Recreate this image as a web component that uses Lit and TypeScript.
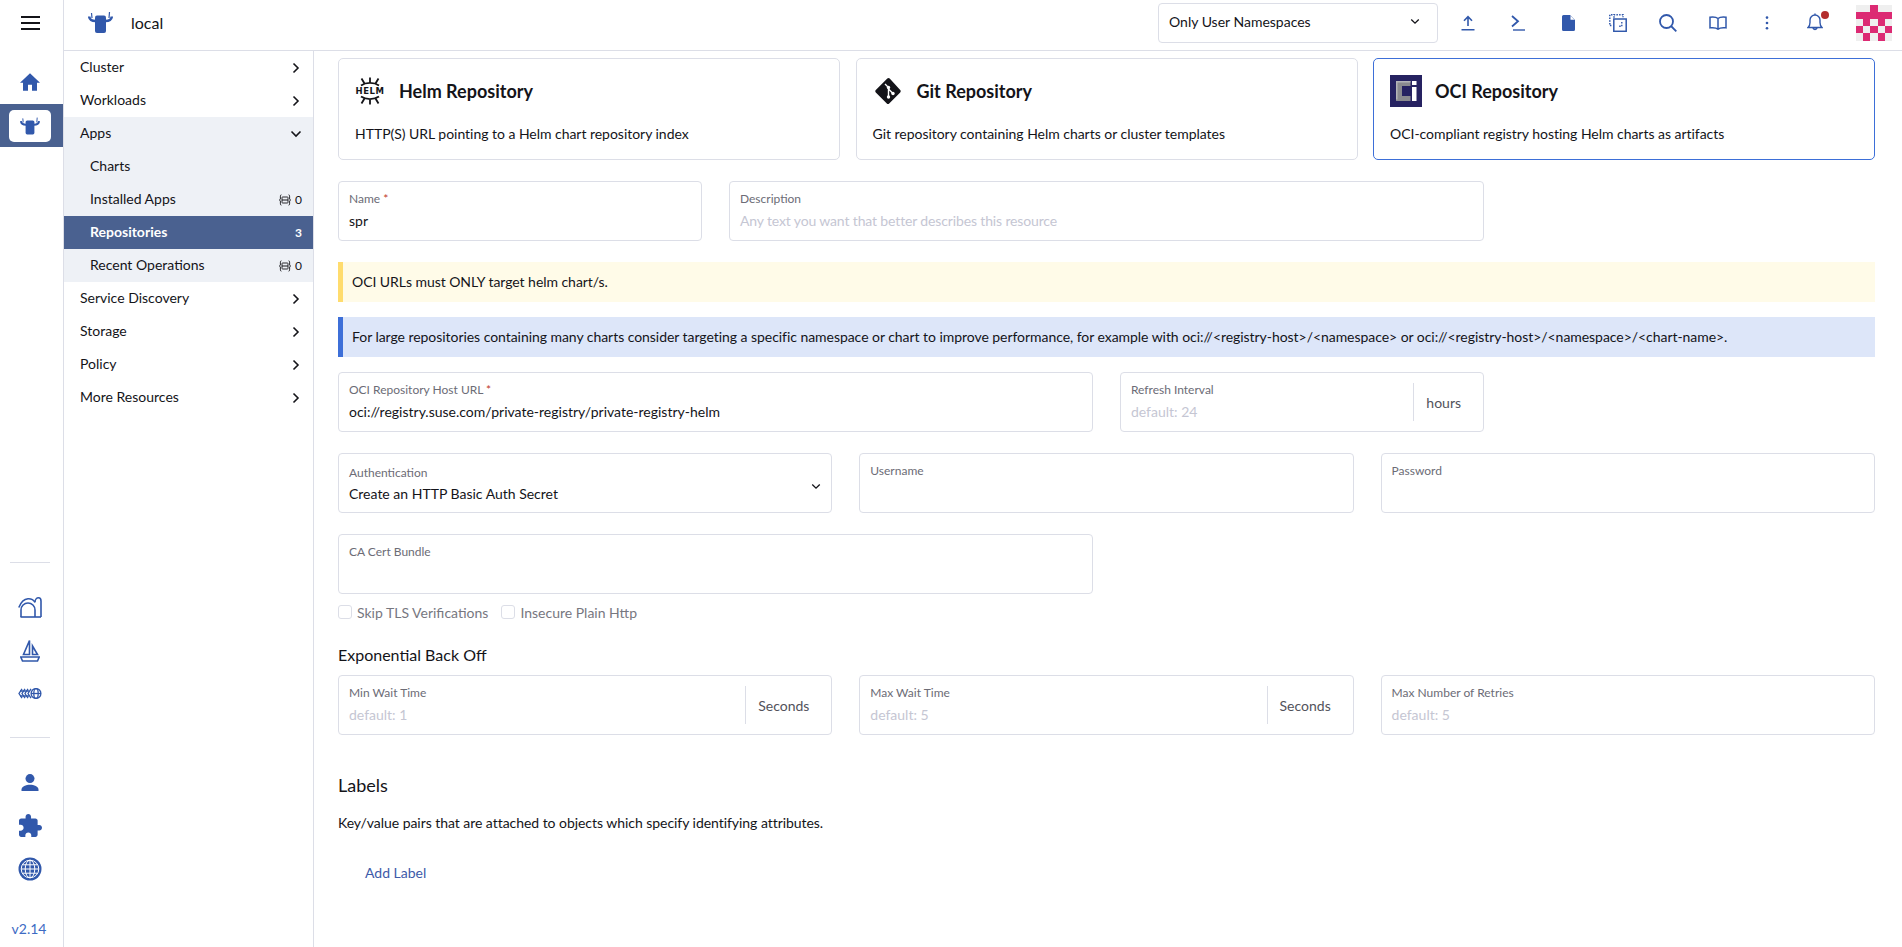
import { LitElement, html, css } from 'lit';
import { customElement } from 'lit/decorators.js';

const bull = html`<svg viewBox="0 0 25 21" class="bull"><path d="M7 5.500a2 2 0 0 1 2-2h7a2 2 0 0 1 2 2v13.500a2 2 0 0 1-2 2H9a2 2 0 0 1-2-2z" fill="currentColor"/><path d="M1.200 4.500c.3 3.200 2.400 4.500 6.300 4.500M23.800 4.500c-.3 3.200-2.400 4.500-6.300 4.500" fill="none" stroke="currentColor" stroke-width="2.600"/><path d="M3.500 1l.5 5M21.500 0l-.5 6" fill="none" stroke="currentColor" stroke-width="1.200"/></svg>`;

const chevR = html`<svg viewBox="0 0 8 12" class="chev"><path d="M1.500 1.500L6 6l-4.500 4.500" fill="none" stroke="currentColor" stroke-width="1.600"/></svg>`;
const chevD = html`<svg viewBox="0 0 12 8" class="chev-d"><path d="M1.500 1.500L6 6l4.500-4.500" fill="none" stroke="currentColor" stroke-width="1.600"/></svg>`;
const nsIcon = html`<svg viewBox="0 0 12 12" class="ns"><path d="M2.400 .8C1.400 .8 1.400 1.800 1.400 3v2L.4 6l1 1v2c0 1.200 0 2.200 1 2.200M9.600 .8c1 0 1 1 1 2.200v2l1 1-1 1v2c0 1.200 0 2.200-1 2.200" fill="none" stroke="currentColor" stroke-width=".9"/><rect x="3" y="3" width="6" height="6" rx=".6" fill="none" stroke="currentColor" stroke-width=".9"/><path d="M3 6h6" stroke="currentColor" stroke-width="1"/></svg>`;

const topIcons = [
  html`<svg viewBox="0 0 14 16" width="14" height="16"><path d="M7 11V2M3 5.800L7 1.600l4 4.200M.5 14.800h13" fill="none" stroke="currentColor" stroke-width="1.600"/></svg>`,
  html`<svg viewBox="0 0 14 16" width="14" height="16"><path d="M1 1l6 5.200L1 11.500" fill="none" stroke="currentColor" stroke-width="1.800"/><path d="M2 15h12" stroke="currentColor" stroke-width="1.400"/></svg>`,
  html`<svg viewBox="0 0 13 16" width="13" height="16"><path d="M1.500 0H8l5 5v9.500a1.500 1.500 0 0 1-1.500 1.500h-10A1.500 1.500 0 0 1 0 14.500v-13A1.500 1.500 0 0 1 1.500 0z" fill="currentColor"/><path d="M8.500 0.800v4h4z" fill="#fff"/></svg>`,
  html`<svg viewBox="0 0 18 18" width="18" height="18"><path d="M5 3.800V.8h9v2.500M3.500.8H.8v10.700h2.400" fill="none" stroke="currentColor" stroke-width="1.500" stroke-dasharray="1.500 1.200"/><rect x="4.800" y="5" width="12.400" height="12.300" fill="#fff" stroke="currentColor" stroke-width="1.500"/><path d="M12.800 8v4.300H9" fill="none" stroke="currentColor" stroke-width="1.400" stroke-dasharray="1.500 1.200"/></svg>`,
  html`<svg viewBox="0 0 18 18" width="18" height="18"><circle cx="7.500" cy="7.500" r="6.500" fill="none" stroke="currentColor" stroke-width="1.800"/><path d="M12 12l5.300 5.300" stroke="currentColor" stroke-width="1.800"/></svg>`,
  html`<svg viewBox="0 0 18 14" width="18" height="14"><path d="M9 2.500C7.500 1.200 4.500.8 1 1.200v10.600c3.500-.4 6.500 0 8 1.400 1.500-1.400 4.500-1.800 8-1.400V1.200C13.500.8 10.500 1.200 9 2.500zM9 2.500v10.700" fill="none" stroke="currentColor" stroke-width="1.500"/></svg>`,
  html`<svg viewBox="0 0 4 14" width="4" height="14"><circle cx="2" cy="1.600" r="1.300" fill="currentColor"/><circle cx="2" cy="7" r="1.300" fill="currentColor"/><circle cx="2" cy="12.200" r="1.300" fill="currentColor"/></svg>`,
  html`<svg viewBox="0 0 16 19" width="16" height="19"><path d="M1 14.500c1.400-1.200 2-2.500 2-5V7a5 5 0 0 1 10 0v2.500c0 2.500.6 3.800 2 5zM5.800 14.800a2.300 2.300 0 0 0 4.400 0M8 .5v1.500" fill="none" stroke="currentColor" stroke-width="1.400"/></svg>`,
];

const railApps = [
  html`<svg viewBox="0 0 24 21" width="24" height="21"><g fill="none" stroke="currentColor" stroke-width="1.600"><path d="M3 20v-7a7 7 0 0 1 14 0v7"/><path d="M.8 10.500C3 5 6 2.200 10 1.800c3-.2 5.500 1 7 3.500"/><path d="M17 5.300C17 2.300 18.800.8 20.500.8 22.200.8 23 2.200 23 4v16"/><path d="M2.500 20H23"/></g></svg>`,
  html`<svg viewBox="0 0 20 23" width="20" height="23"><path d="M9.500 1.500L3.500 15.500h6zM12.500 7l5 8.500h-5z" fill="none" stroke="currentColor" stroke-width="1.600"/><path d="M.8 18h18.400l-1.700 4H2.500z" fill="none" stroke="currentColor" stroke-width="1.600"/></svg>`,
  html`<svg viewBox="0 0 24 11" width="24" height="11"><g fill="none" stroke="currentColor" stroke-width="1.300"><path d="M4 .8L1 5.500 4 10.200M7 .8L4 5.500 7 10.200M10 .8L7 5.500 10 10.200M13 .8L10 5.500 13 10.200"/><path d="M2 3h3M2 8h3M5 3h3M5 8h3M8 3h3M8 8h3"/><circle cx="18" cy="5.500" r="4.900"/><ellipse cx="18" cy="5.500" rx="2.200" ry="4.900"/><path d="M13 5.500h10"/></g></svg>`,
];

const railBottom = [
  html`<svg viewBox="0 0 18 17" width="18" height="17"><circle cx="9" cy="4.600" r="4.500" fill="currentColor"/><path d="M.5 17v-1.500C.5 12.500 5 10.800 9 10.800s8.500 1.700 8.500 4.700V17z" fill="currentColor"/></svg>`,
  html`<svg viewBox="2 1 21 21" width="23" height="23"><path d="M20.500 11H19V7c0-1.100-.9-2-2-2h-4V3.500C13 2.120 11.880 1 10.500 1S8 2.120 8 3.500V5H4c-1.100 0-1.990.9-1.990 2v3.800H3.500c1.490 0 2.700 1.210 2.700 2.700s-1.210 2.700-2.700 2.700H2V20c0 1.100.9 2 2 2h3.800v-1.500c0-1.490 1.210-2.700 2.700-2.700 1.490 0 2.700 1.210 2.700 2.700V22H17c1.100 0 2-.9 2-2v-4h1.500c1.380 0 2.500-1.120 2.500-2.500S21.880 11 20.500 11z" fill="currentColor"/></svg>`,
  html`<svg viewBox="0 0 24 24" width="24" height="24"><circle cx="12" cy="12" r="11.500" fill="currentColor"/><g fill="none" stroke="#fff" stroke-width="1"><ellipse cx="12" cy="12" rx="4.800" ry="8.800"/><path d="M12 3.200v17.600M3.200 12h17.600M4.400 7.800h15.200M4.400 16.200h15.200"/><circle cx="12" cy="12" r="8.800"/></g></svg>`,
];

const helmLogo = html`<svg viewBox="0 0 30 30" width="30" height="30" class="repo-icon pad"><g fill="none" stroke="#141419" stroke-width="1.800"><path d="M6 9.500c5 -3.500 13-3.500 18 0M15 7V1.500M9.500 7.500L6.500 2.500M20.500 7.500l3-5M6 20.500c5 3.500 13 3.500 18 0M15 23v5.500M9.500 22.500l-3 5M20.500 22.500l3 5"/></g><text x="15" y="18.200" text-anchor="middle" class="helm-word">HELM</text></svg>`;
const gitLogo = html`<svg viewBox="0 0 30 30" width="30" height="30" class="repo-icon pad"><path d="M14.300 2.500L2.800 14c-.7.7-.7 1.700 0 2.400l11 11c.7.7 1.700.7 2.400 0l11-11c.7-.7.7-1.700 0-2.400L16.700 2.500c-.7-.7-1.700-.7-2.400 0z" fill="#141419"/><path d="M12 8l3.500 3.500v10M15.500 13l4.500 4.500" fill="none" stroke="#fff" stroke-width="1.400"/><circle cx="15.500" cy="11.500" r="1.700" fill="#fff"/><circle cx="15.500" cy="21" r="1.700" fill="#fff"/><circle cx="20" cy="17.500" r="1.700" fill="#fff"/></svg>`;
const ociLogo = html`<svg viewBox="0 0 32 32" width="32" height="32" class="repo-icon"><rect width="32" height="32" fill="#262261"/><path d="M6 6h14.500v5H12v10h8.500v5H6z" fill="#8a8a8f"/><path d="M6 6h14.500v1.500H7.500v17H6z" fill="#b4b4b8"/><rect x="22" y="6" width="4.500" height="4" fill="#fff"/><rect x="22" y="12" width="4.500" height="14" fill="#fff"/></svg>`;

// 5x5 identicon, 1 = pink
const avatarCells = [
  0, 0, 1, 0, 0,
  1, 1, 1, 1, 1,
  0, 1, 0, 1, 0,
  1, 0, 1, 0, 1,
  0, 1, 0, 1, 0,
];

const repoCards = [
  { logo: helmLogo, title: 'Helm Repository', desc: 'HTTP(S) URL pointing to a Helm chart repository index', on: false },
  { logo: gitLogo, title: 'Git Repository', desc: 'Git repository containing Helm charts or cluster templates', on: false },
  { logo: ociLogo, title: 'OCI Repository', desc: 'OCI-compliant registry hosting Helm charts as artifacts', on: true },
];

const navBefore = ['Cluster', 'Workloads'];
const navAfter = ['Service Discovery', 'Storage', 'Policy', 'More Resources'];

@customElement('app-root')
export class AppRoot extends LitElement {
  static styles = css`
    :host {
      display: block;
      height: 100vh;
      overflow: hidden;
      background: #fff;
      color: #141419;
      font-family: Lato, 'Noto Sans', sans-serif;
      font-size: 14px;
      --blue: #3158ab;
      --line: #dcdee7;
      --active: #4a6190;
    }
    * { box-sizing: border-box; }

    .app { display: grid; grid-template-columns: 64px 1fr; height: 100%; }

    /* left rail */
    .rail { display: flex; flex-direction: column; border-right: 1px solid var(--line); color: var(--blue); }
    .burger { height: 46px; margin-bottom: 15px; padding-right: 3px; display: flex; flex-direction: column; justify-content: center; align-items: center; gap: 3.700px; }
    .burger i { display: block; width: 19px; height: 2px; background: #141419; }
    .rail-item { height: 43px; padding-right: 3px; display: flex; align-items: center; justify-content: center; }
    .rail-item.on { background: var(--active); }
    .home { margin-bottom: 1px; }
    .logo-box { width: 42px; height: 32px; margin-right: 1px; background: #fff; border-radius: 5px; display: flex; align-items: center; justify-content: center; }
    .logo-box .bull { width: 20px; height: 18px; }
    .rail-bottom { margin-top: auto; display: flex; flex-direction: column; }
    .rail-group { padding: 23px 0 22px; }
    .rail-group.last { padding-bottom: 0; }
    .rule { height: 1px; background: var(--line); margin: 0 13px 0 10px; }
    .version { text-align: center; padding: 29px 5px 8px 0; color: #3d6bc4; font-size: 14px; line-height: 20px; }

    /* header */
    .main { display: grid; grid-template-rows: 51px 1fr; min-width: 0; min-height: 0; }
    .header { display: flex; align-items: center; padding: 0 10px 5px 24px; border-bottom: 1px solid var(--line); }
    .bull { width: 25px; height: 21px; color: var(--blue); display: block; }
    .cluster { margin-left: 18px; font-size: 16px; }
    .ns-select { margin-left: auto; width: 279.500px; height: 40px; border: 1px solid var(--line); border-radius: 4px; display: flex; align-items: center; justify-content: space-between; padding: 0 17px 2px 10px; }
    .ns-select .chev-d { width: 10px; height: 7px; }
    .tools { display: flex; margin-left: 5.500px; color: var(--blue); }
    .tool { width: 50px; display: flex; justify-content: center; align-items: center; position: relative; }
    .tool.narrow { width: 47px; }
    .tool.last { width: 49px; }
    .red { position: absolute; width: 8px; height: 8px; border-radius: 50%; background: #b32d2d; left: 31px; top: -2px; }
    .avatar { margin-left: 17px; width: 36px; height: 36px; display: grid; grid-template-columns: repeat(5, 1fr); background: #efefef; }
    .avatar i.p { background: #dc2a73; }

    .body { display: grid; grid-template-columns: 250px 1fr; min-height: 0; }

    /* cluster menu */
    .menu { border-right: 1px solid var(--line); }
    .row { height: 33px; display: flex; align-items: center; justify-content: space-between; padding: 0 11px 0 16px; }
    .row > span:first-child { margin-bottom: 2px; }
    .group { background: #eef1f6; }
    .row.child { padding-left: 26px; }
    .row.sel { background: var(--active); color: #fff; font-weight: 700; }
    .chev { width: 8px; height: 12px; margin-right: 2px; }
    .chev-d { width: 12px; height: 8px; }
    .count { display: flex; align-items: center; gap: 4px; font-size: 12px; }
    .ns { width: 12px; height: 12px; }

    /* form */
    .content { padding: 7px 27px 0 24px; min-width: 0; }
    .cards { display: grid; grid-template-columns: repeat(3, 1fr); gap: 15.500px; margin-bottom: 21px; }
    .card { height: 102px; border: 1px solid var(--line); border-radius: 5px; padding: 15px 16px; }
    .card.on { border-color: #3d6fd8; }
    .card-head { display: flex; align-items: center; gap: 13px; height: 33px; }
    .repo-icon { flex: none; }
    .repo-icon.pad { margin-right: 1px; }
    .card-head b { font-size: 18px; font-weight: 700; }
    .card p { margin: 17px 0 0; line-height: 20px; letter-spacing: -.03px; }
    .helm-word { font-family: 'DejaVu Sans', sans-serif; font-size: 8.500px; font-weight: 700; fill: #141419; letter-spacing: .5px; }

    .grid { display: grid; grid-template-columns: repeat(12, 1fr); column-gap: 1.750%; margin-bottom: 21px; }
    .s3 { grid-column: span 3; }
    .s4 { grid-column: span 4; }
    .s6 { grid-column: span 6; }
    .field { height: 60px; border: 1px solid var(--line); border-radius: 4px; display: flex; position: relative; }
    .field-main { flex: 1; padding: 8px 10px 0; min-width: 0; }
    .field label { display: block; font-size: 12px; line-height: 18px; color: #6c6c76; }
    .req { color: #c0392b; }
    .val { margin-top: 3px; line-height: 20px; }
    .ph { color: #c5c6d3; }
    .tight { letter-spacing: -.14px; }
    .sel-field .field-main { padding-top: 10px; }
    .sel-field .val { margin-top: 2px; }
    .sel-field .chev-d { width: 10px; height: 7px; position: absolute; right: 10px; top: 29px; }
    .unit { margin: 10px 0; padding: 0 22px 0 12px; border-left: 1px solid var(--line); display: flex; align-items: center; color: #52525b; }

    .banner { height: 40px; margin-bottom: 15px; padding: 0 0 2px 9px; display: flex; align-items: center; border-left: 5px solid; letter-spacing: -.05px; }
    .banner.warn { background: #fffbe8; border-color: #ffdc6e; }
    .banner.info { background: #dde6f9; border-color: #3d6fd8; }

    .checks { display: flex; height: 20px; gap: 13px; margin: -13px 0 23px; color: #77777f; }
    .check { display: flex; align-items: center; gap: 5px; }
    .check i { width: 14px; height: 14px; border: 1px solid var(--line); border-radius: 3px; }
    .sub { font-size: 16px; line-height: 20px; margin-bottom: 10px; }
    .h-labels { font-size: 18px; line-height: 24px; margin: 38px 0 16px; }
    .hint { line-height: 20px; letter-spacing: -.045px; }
    .add { color: #3d5aa9; margin: 30px 0 0 27px; line-height: 20px; }
  `;

  field(label: string, val = '', opts: { req?: boolean; ph?: string; unit?: string; span?: string; tight?: boolean } = {}) {
    return html`
      <div class="field ${opts.span ?? ''}">
        <div class="field-main">
          <label>${label}${opts.req ? html` <span class="req">*</span>` : ''}</label>
          <div class="val ${opts.ph ? 'ph' : ''} ${opts.tight ? 'tight' : ''}">${opts.ph ?? val}</div>
        </div>
        ${opts.unit ? html`<div class="unit">${opts.unit}</div>` : ''}
      </div>
    `;
  }

  renderRail() {
    return html`
      <aside class="rail">
        <div class="burger"><i></i><i></i><i></i></div>
        <div class="rail-item"><svg class="home" viewBox="2 3 20 17.500" width="20" height="18"><path d="M10 20.500v-6h4v6h5v-8h3L12 3 2 12.500h3v8z" fill="currentColor"/></svg></div>
        <div class="rail-item on"><div class="logo-box">${bull}</div></div>
        <div class="rail-bottom">
          <div class="rule"></div>
          <div class="rail-group">${railApps.map((i) => html`<div class="rail-item">${i}</div>`)}</div>
          <div class="rule"></div>
          <div class="rail-group last">${railBottom.map((i) => html`<div class="rail-item">${i}</div>`)}</div>
          <div class="version">v2.14</div>
        </div>
      </aside>
    `;
  }

  renderHeader() {
    return html`
      <header class="header">
        ${bull}
        <span class="cluster">local</span>
        <div class="ns-select"><span>Only User Namespaces</span>${chevD}</div>
        <div class="tools">
          ${topIcons.map((icon, i) => html`<div class="tool ${i === 6 ? 'narrow' : ''} ${i === 7 ? 'last' : ''}">${icon}${i === 7 ? html`<span class="red"></span>` : ''}</div>`)}
        </div>
        <div class="avatar">${avatarCells.map((c) => html`<i class=${c ? 'p' : ''}></i>`)}</div>
      </header>
    `;
  }

  renderMenu() {
    return html`
      <nav class="menu">
        ${navBefore.map((n) => html`<div class="row"><span>${n}</span>${chevR}</div>`)}
        <div class="group">
          <div class="row"><span>Apps</span>${chevD}</div>
          <div class="row child"><span>Charts</span></div>
          <div class="row child"><span>Installed Apps</span><span class="count">${nsIcon}0</span></div>
          <div class="row child sel"><span>Repositories</span><span class="count">3</span></div>
          <div class="row child"><span>Recent Operations</span><span class="count">${nsIcon}0</span></div>
        </div>
        ${navAfter.map((n) => html`<div class="row"><span>${n}</span>${chevR}</div>`)}
      </nav>
    `;
  }

  renderForm() {
    return html`
      <main class="content">
        <div class="cards">
          ${repoCards.map((c) => html`
            <div class="card ${c.on ? 'on' : ''}">
              <div class="card-head">${c.logo}<b>${c.title}</b></div>
              <p>${c.desc}</p>
            </div>
          `)}
        </div>
        <div class="grid">
          ${this.field('Name', 'spr', { req: true, span: 's3' })}
          ${this.field('Description', '', { ph: 'Any text you want that better describes this resource', span: 's6', tight: true })}
        </div>
        <div class="banner warn">OCI URLs must ONLY target helm chart/s.</div>
        <div class="banner info">For large repositories containing many charts consider targeting a specific namespace or chart to improve performance, for example with oci://&lt;registry-host&gt;/&lt;namespace&gt; or oci://&lt;registry-host&gt;/&lt;namespace&gt;/&lt;chart-name&gt;.</div>
        <div class="grid">
          ${this.field('OCI Repository Host URL', 'oci://registry.suse.com/private-registry/private-registry-helm', { req: true, span: 's6' })}
          ${this.field('Refresh Interval', '', { ph: 'default: 24', unit: 'hours', span: 's3' })}
        </div>
        <div class="grid">
          <div class="field sel-field s4">
            <div class="field-main">
              <label>Authentication</label>
              <div class="val">Create an HTTP Basic Auth Secret</div>
            </div>
            ${chevD}
          </div>
          ${this.field('Username', '', { span: 's4' })}
          ${this.field('Password', '', { span: 's4' })}
        </div>
        <div class="grid">${this.field('CA Cert Bundle', '', { span: 's6' })}</div>
        <div class="checks">
          <div class="check"><i></i>Skip TLS Verifications</div>
          <div class="check"><i></i>Insecure Plain Http</div>
        </div>
        <div class="sub">Exponential Back Off</div>
        <div class="grid">
          ${this.field('Min Wait Time', '', { ph: 'default: 1', unit: 'Seconds', span: 's4' })}
          ${this.field('Max Wait Time', '', { ph: 'default: 5', unit: 'Seconds', span: 's4' })}
          ${this.field('Max Number of Retries', '', { ph: 'default: 5', span: 's4' })}
        </div>
        <div class="h-labels">Labels</div>
        <div class="hint">Key/value pairs that are attached to objects which specify identifying attributes.</div>
        <div class="add">Add Label</div>
      </main>
    `;
  }

  render() {
    return html`
      <div class="app">
        ${this.renderRail()}
        <div class="main">
          ${this.renderHeader()}
          <div class="body">
            ${this.renderMenu()}
            ${this.renderForm()}
          </div>
        </div>
      </div>
    `;
  }
}
